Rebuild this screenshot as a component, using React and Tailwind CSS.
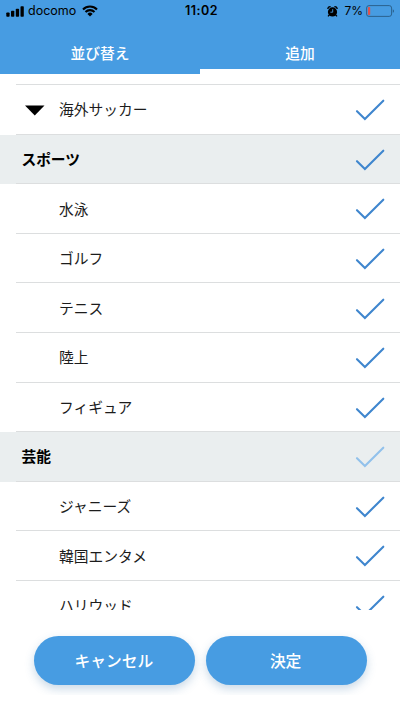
import React, { useState } from "react";

const initialRows = [
  { id: "world-soccer", label: "海外サッカー", type: "parent", checked: true },
  { id: "sports", label: "スポーツ", type: "section", checked: true },
  { id: "swimming", label: "水泳", type: "item", checked: true },
  { id: "golf", label: "ゴルフ", type: "item", checked: true },
  { id: "tennis", label: "テニス", type: "item", checked: true },
  { id: "athletics", label: "陸上", type: "item", checked: true },
  { id: "figure", label: "フィギュア", type: "item", checked: true },
  { id: "showbiz", label: "芸能", type: "section", checked: false },
  { id: "johnnys", label: "ジャニーズ", type: "item", checked: true },
  { id: "korea", label: "韓国エンタメ", type: "item", checked: true },
  { id: "hollywood", label: "ハリウッド", type: "item", checked: true },
];

function StatusBar() {
  return (
    <div className="grid h-[22px] grid-cols-3 items-center pl-[6px] pr-[5px] font-['Inter',sans-serif] text-black">
      <div className="flex items-center">
        <svg width="18" height="11" viewBox="0 0 18 11" fill="currentColor">
          <rect x="0.3" y="6.5" width="3.3" height="4.2" rx="0.8" />
          <rect x="5" y="4.8" width="3.3" height="5.9" rx="0.8" />
          <rect x="9.8" y="2.7" width="3.3" height="8" rx="0.8" />
          <rect x="14.5" y="0.3" width="3.3" height="10.4" rx="0.8" />
        </svg>
        <span className="ml-[4px] pt-px text-[12.5px] leading-none">docomo</span>
        <svg className="ml-[6px]" width="16" height="12" viewBox="0 0 16 12" fill="none" stroke="currentColor" strokeWidth="2.1">
          <path d="M1 4.4a10 10 0 0 1 14 0" />
          <path d="M3.5 7a6.4 6.4 0 0 1 9 0" />
          <path d="M8 11.5 5.4 8.9a3.7 3.7 0 0 1 5.2 0Z" fill="currentColor" stroke="none" />
        </svg>
      </div>
      <div className="pl-[2px] pt-px text-center text-[12.5px] font-semibold leading-none tracking-[0.5px]">11:02</div>
      <div className="flex items-center justify-end">
        <svg width="11" height="11" viewBox="0 0 11 11" fill="none">
          <path d="M2.2 9 1 10.4M8.8 9 10 10.4" stroke="#000" strokeWidth="1.2" />
          <path d="M.8 3A2.6 2.6 0 0 1 3.6.7M10.2 3A2.6 2.6 0 0 0 7.4.7" stroke="#000" strokeWidth="1.3" />
          <circle cx="5.5" cy="5.9" r="4.6" fill="#000" />
          <path d="M5.7 3.2v3H3.4" stroke="#479ce2" strokeWidth="0.9" />
        </svg>
        <span className="ml-[6px] text-[12px] leading-none">7%</span>
        <svg className="ml-[3px]" width="29" height="12" viewBox="0 0 29 12" fill="none">
          <rect x="0.6" y="0.6" width="25" height="10.8" rx="2.4" stroke="#285b84" strokeWidth="0.9" />
          <rect x="1.9" y="1.9" width="2.3" height="8.2" rx="0.8" fill="#e0524d" />
          <path d="M26.8 4.2c1.5.5 1.5 3.1 0 3.6Z" fill="#285b84" />
        </svg>
      </div>
    </div>
  );
}

function Check({ checked }) {
  return (
    <svg
      className={checked ? "mt-[1.5px] text-[#3f86ce]" : "mt-[1.5px] text-[#92c1eb]"}
      width="30"
      height="22"
      viewBox="0 0 30 22"
      fill="none"
      stroke="currentColor"
      strokeWidth="2.1"
      strokeLinecap="round"
    >
      <path d="M2 12.2 9.9 20 28.3 1.7" />
    </svg>
  );
}

function Row({ row, onToggle }) {
  const isSection = row.type === "section";

  return (
    <div
      onClick={() => onToggle(row.id)}
      className={`flex h-[49.6px] shrink-0 cursor-pointer pl-4 text-[14.75px] ${
        isSection ? "bg-[#eaeeef] font-bold text-black" : "bg-white text-[#1c1c1c]"
      }`}
    >
      <div className="flex flex-1 items-center border-b border-[#dcdedf] pr-[15px]">
        {!isSection && (
          <div className="w-[43px] pl-[9px]">
            {row.type === "parent" && (
              <svg className="mt-[2px]" width="20" height="11" viewBox="0 0 20 11">
                <path d="M0 0.5h19.5L9.75 10.5Z" fill="#000" />
              </svg>
            )}
          </div>
        )}
        <span className={isSection ? "flex-1 pl-[5.5px] tracking-[-0.1px]" : "flex-1"}>{row.label}</span>
        <Check checked={row.checked} />
      </div>
    </div>
  );
}

export default function App() {
  const [rows, setRows] = useState(initialRows);
  const [tab, setTab] = useState("add");

  const handleToggle = (id) => {
    setRows((prev) =>
      prev.map((row) => (row.id === id ? { ...row, checked: !row.checked } : row))
    );
  };

  const tabs = [
    { id: "sort", label: "並び替え" },
    { id: "add", label: "追加" },
  ];

  return (
    <div className="flex h-[711px] w-[400px] flex-col overflow-hidden bg-white font-['Noto_Sans_CJK_JP',sans-serif]">
      {/* HEADER */}
      <header className="h-[74px] shrink-0 bg-[#479ce2]">
        <StatusBar />
        <div className="grid h-[52px] grid-cols-2">
          {tabs.map((t) => (
            <button
              key={t.id}
              onClick={() => setTab(t.id)}
              className={`border-b-[5px] pt-[20px] pb-[6px] text-[14.75px] font-medium leading-[21px] text-white ${
                tab === t.id ? "border-white" : "border-transparent"
              }`}
            >
              {t.label}
            </button>
          ))}
        </div>
      </header>

      {/* CATEGORY LIST */}
      <main className="flex h-[535.5px] shrink-0 flex-col overflow-hidden">
        <div className="ml-4 h-[11.1px] shrink-0 border-b border-[#dcdedf]" />
        {rows.map((row) => (
          <Row key={row.id} row={row} onToggle={handleToggle} />
        ))}
      </main>

      {/* BUTTONS */}
      <footer className="flex h-[85.5px] shrink-0 gap-[11px] overflow-hidden pt-[26.5px] pr-[33.5px] pl-[34px]">
        <button className="h-[49px] flex-1 rounded-full bg-[#479ce2] pr-px text-[15.75px] font-medium text-white shadow-[0_4px_10px_rgba(60,120,170,0.28)]">
          キャンセル
        </button>
        <button className="h-[49px] flex-1 rounded-full bg-[#479ce2] pr-px text-[15.75px] font-medium text-white shadow-[0_4px_10px_rgba(60,120,170,0.28)]">
          決定
        </button>
      </footer>
    </div>
  );
}
